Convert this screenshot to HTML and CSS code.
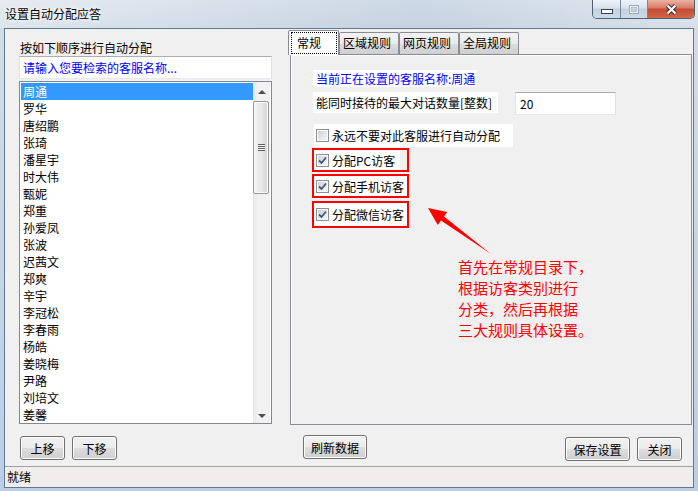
FILE: index.html
```html
<!DOCTYPE html>
<html lang="zh-CN">
<head>
  <meta charset="UTF-8" />
  <meta name="viewport" content="width=device-width, initial-scale=1.0" />
  <title>设置自动分配应答</title>
  <link rel="stylesheet" href="styles.css">
</head>
<body>
  <div class="window">
    <div class="titlebar">
      <span class="title">设置自动分配应答</span>
      <div class="caption-buttons">
        <span class="cap min"><span class="min-icon"></span></span>
        <span class="cap max"><span class="max-icon"></span></span>
        <span class="cap close">
          <svg width="13" height="11" viewBox="0 0 13 11">
            <path d="M2.5 1.5 L10.5 9.5 M10.5 1.5 L2.5 9.5" stroke="#3b2a27" stroke-width="4.2" />
            <path d="M2.5 1.5 L10.5 9.5 M10.5 1.5 L2.5 9.5" stroke="#ffffff" stroke-width="2.2" />
          </svg>
        </span>
      </div>
    </div>

    <div class="client">
      <div class="main">
        <div class="left">
          <div class="caption">按如下顺序进行自动分配</div>
          <div class="search">请输入您要检索的客服名称...</div>
          <div class="listbox">
            <ul class="items">
              <li class="selected">周通</li>
              <li>罗华</li>
              <li>唐绍鹏</li>
              <li>张琦</li>
              <li>潘星宇</li>
              <li>时大伟</li>
              <li>甄妮</li>
              <li>郑重</li>
              <li>孙爱凤</li>
              <li>张波</li>
              <li>迟茜文</li>
              <li>郑爽</li>
              <li>辛宇</li>
              <li>李冠松</li>
              <li>李春雨</li>
              <li>杨皓</li>
              <li>姜晓梅</li>
              <li>尹路</li>
              <li>刘培文</li>
              <li>姜馨</li>
            </ul>
            <div class="vscroll">
              <div class="arrow"><span class="tri up"></span></div>
              <div class="thumb"><span class="grip"></span></div>
              <div class="track"></div>
              <div class="arrow"><span class="tri down"></span></div>
            </div>
          </div>
          <div class="btn-row">
            <button class="btn small">上移</button>
            <button class="btn small">下移</button>
          </div>
        </div>

        <div class="right">
          <div class="tabs">
            <div class="tab active"><span class="focus">常规</span></div>
            <div class="tab">区域规则</div>
            <div class="tab">网页规则</div>
            <div class="tab">全局规则</div>
          </div>
          <div class="tab-page">
            <div class="blue-label">当前正在设置的客服名称:周通</div>
            <div class="field-row">
              <div class="field-label">能同时接待的最大对话数量[整数]</div>
              <div class="num-input">20</div>
            </div>
            <div class="check never"><span class="box"></span>永远不要对此客服进行自动分配</div>
            <div class="mark mark-pc">
              <div class="check short">
                <span class="box"><svg width="9" height="9" viewBox="0 0 9 9"><path d="M1 4.5 L3.5 7 L8 1.5" fill="none" stroke="#3f5589" stroke-width="1.8" /></svg></span>分配PC访客
              </div>
            </div>
            <div class="mark mark-mobile">
              <div class="check">
                <span class="box"><svg width="9" height="9" viewBox="0 0 9 9"><path d="M1 4.5 L3.5 7 L8 1.5" fill="none" stroke="#3f5589" stroke-width="1.8" /></svg></span>分配手机访客
              </div>
            </div>
            <div class="mark mark-wechat">
              <div class="check">
                <span class="box"><svg width="9" height="9" viewBox="0 0 9 9"><path d="M1 4.5 L3.5 7 L8 1.5" fill="none" stroke="#3f5589" stroke-width="1.8" /></svg></span>分配微信访客
              </div>
            </div>

            <svg class="note-arrow" width="75" height="60" viewBox="0 0 75 60">
              <polygon points="7,7 26.2,11.1 23,15.6 70,53 20,19.6 16.8,24.1" fill="#ff0000" />
            </svg>
            <div class="note">首先在常规目录下，<br>根据访客类别进行<br>分类，然后再根据<br>三大规则具体设置。</div>
          </div>
          <div class="btn-row actions">
            <button class="btn refresh">刷新数据</button>
            <button class="btn save">保存设置</button>
            <button class="btn small">关闭</button>
          </div>
        </div>
      </div>
      <div class="statusbar">就绪</div>
    </div>
  </div>
</body>
</html>
```

FILE: styles.css
```css
* { box-sizing: border-box; }
body {
  margin: 0;
  width: 698px;
  height: 491px;
  overflow: hidden;
  font-family: "Noto Sans CJK SC", "Noto Sans", sans-serif;
  font-size: 12px;
  color: #000;
}
.window {
  width: 698px;
  height: 491px;
  display: flex;
  flex-direction: column;
  padding-bottom: 3px;
  background: linear-gradient(180deg, #dde5ed 0, #d2dce7 28px, #b9cfe6 100%);
}

/* title bar */
.titlebar {
  height: 28px;
  flex: none;
  display: flex;
  justify-content: space-between;
  align-items: flex-start;
  padding: 0 3px 0 5px;
  background: linear-gradient(90deg, rgba(255,255,255,0.25), rgba(160,180,205,0.25) 60%, rgba(255,255,255,0.1));
}
.title {
  line-height: 28px;
  text-shadow: 0 0 6px #fff, 0 0 3px #fff;
}
.caption-buttons {
  display: flex;
  height: 19px;
  border: 1px solid #4e6073;
  border-top: 0;
  border-radius: 0 0 5px 5px;
  overflow: hidden;
}
.cap {
  height: 100%;
  display: flex;
  align-items: center;
  justify-content: center;
}
.cap.min, .cap.max {
  border-right: 1px solid #74879a;
  background: linear-gradient(#eef3f8, #d8e2ec 45%, #c2d0de 50%, #cfdbe7);
}
.cap.min { width: 28px; }
.cap.max { width: 27px; }
.cap.close {
  width: 46px;
  background: linear-gradient(#eab2a4, #d77a66 45%, #c54a30 50%, #d2664a);
}
.min-icon {
  width: 12px;
  height: 5px;
  margin-top: 4px;
  background: #fff;
  border: 1px solid #34404c;
}
.max-icon {
  width: 10px;
  height: 9px;
  border: 1px solid #9aa7b5;
  box-shadow: inset 0 0 0 1px #eef2f6, inset 0 0 0 2px #b3bfcb;
}

/* client area */
.client {
  flex: 1;
  margin: 0 4px;
  border: 1px solid #62788f;
  background: #f0f0f0;
  display: flex;
  flex-direction: column;
}
.main {
  flex: 1;
  display: flex;
  gap: 18px;
  padding-left: 14px;
}
.left {
  width: 253px;
  display: flex;
  flex-direction: column;
}
.caption {
  margin-top: 12px;
  line-height: 14px;
  padding-left: 1px;
}
.search {
  margin-top: 1px;
  height: 23px;
  line-height: 21px;
  padding-left: 3px;
  color: #0000ff;
  background: #fff;
  border: 1px solid;
  border-color: #abadb3 #dbdfe6 #e3e9ef #e2e3ea;
}
.listbox {
  margin-top: 2px;
  height: 343px;
  display: flex;
  padding: 0 1px;
  background: #fff;
  border: 1px solid #828790;
}
.items {
  flex: 1;
  list-style: none;
  margin: 0;
  padding: 1px 0 0 0;
  overflow: hidden;
}
.items li {
  height: 17px;
  line-height: 17px;
  padding-left: 2px;
}
.items li.selected {
  background: #3399ff;
  color: #fff;
}
.vscroll {
  width: 17px;
  display: flex;
  flex-direction: column;
  background: linear-gradient(90deg, #e6e6e6, #f2f2f2 30%, #f0f0f0);
}
.arrow {
  height: 17px;
  display: flex;
  align-items: center;
  justify-content: center;
}
.tri {
  width: 0;
  height: 0;
  border-left: 4px solid transparent;
  border-right: 4px solid transparent;
}
.tri.up { border-bottom: 4px solid #4d4d4d; margin-top: 3px; }
.tri.down { border-top: 4px solid #4d4d4d; margin-top: 2px; }
.thumb {
  height: 93px;
  margin: 2px 1px 0 0;
  border: 1px solid #979797;
  border-radius: 2px;
  background: linear-gradient(90deg, #f3f3f3, #e8e8e8 50%, #d4d4d4);
  box-shadow: inset 0 0 0 1px #fbfbfb;
  display: flex;
  align-items: center;
  justify-content: center;
}
.grip {
  width: 7px;
  height: 7px;
  background: repeating-linear-gradient(#5e5e5e 0 1px, #f6f6f6 1px 2px);
}
.track { flex: 1; }

/* buttons */
.btn-row {
  display: flex;
  gap: 7px;
  margin-top: 12px;
  padding-left: 1px;
}
.btn {
  height: 24px;
  padding: 0;
  font-family: inherit;
  font-size: 12px;
  color: #000;
  border: 1px solid #707070;
  border-radius: 3px;
  background: linear-gradient(#f2f2f2, #ebebeb 50%, #dddddd 51%, #cfcfcf);
  box-shadow: inset 0 0 0 1px #fcfcfc;
}
.btn.small { width: 45px; }
.btn.refresh { width: 64px; margin-top: -2px; }
.btn.save { width: 65px; margin-left: auto; }
.btn-row.actions {
  margin-top: 12px;
  padding: 0 10px 0 13px;
}

/* tabs */
.right {
  width: 402px;
  display: flex;
  flex-direction: column;
}
.tabs {
  margin-top: 1px;
  height: 24px;
  display: flex;
  align-items: flex-end;
}
.tab {
  width: 60px;
  height: 22px;
  line-height: 20px;
  padding-left: 3px;
  border: 1px solid #898c95;
  border-bottom: 0;
  border-radius: 2px 2px 0 0;
  background: linear-gradient(#f2f2f2, #ebebeb 50%, #dddddd 51%, #cfcfcf);
}
.tab.active {
  width: 51px;
  height: 25px;
  margin-left: -2px;
  margin-bottom: -1px;
  padding: 1px 1px 0 2px;
  background: #fff;
  position: relative;
  z-index: 1;
}
.focus {
  display: block;
  height: 22px;
  line-height: 20px;
  padding-left: 5px;
  border: 1px dotted #000;
}
.tab-page {
  position: relative;
  height: 371px;
  display: flex;
  flex-direction: column;
  align-items: flex-start;
  padding: 15px 0 0 22px;
  border: 1px solid #898c95;
  background: #f0f0f0;
  box-shadow: inset 1px 1px 0 #fff;
}
.blue-label {
  height: 17px;
  line-height: 17px;
  padding: 0 2px 0 3px;
  color: #0000ff;
  background: #fff;
}
.field-row {
  margin-top: 5px;
  display: flex;
  align-items: flex-start;
}
.field-label {
  width: 185px;
  height: 21px;
  line-height: 21px;
  padding-left: 3px;
  background: #fff;
}
.num-input {
  width: 101px;
  height: 23px;
  margin-left: 17px;
  line-height: 21px;
  padding-left: 4px;
  background: #fff;
  border: 1px solid;
  border-color: #abadb3 #dbdfe6 #e3e9ef #e2e3ea;
}
.check {
  display: flex;
  align-items: center;
  gap: 3px;
  height: 100%;
  width: 100%;
  padding-left: 2px;
  background: #fff;
}
.check.never {
  width: 199px;
  height: 23px;
  margin: 9px 0 0 1px;
}
.check.short { width: 86px; }
.box {
  width: 13px;
  height: 13px;
  flex: none;
  display: flex;
  align-items: center;
  justify-content: center;
  border: 1px solid #8e8f8f;
  background: linear-gradient(135deg, #c6cad0, #eeeeee 70%, #f8f8f8);
  box-shadow: inset 0 0 0 1px #fbfbfb;
}
.mark {
  width: 97px;
  margin-left: -1px;
  border: 2px solid #ff0000;
  display: flex;
}
.mark-pc { height: 24px; margin-top: 1px; }
.mark-mobile { height: 24px; margin-top: 2px; }
.mark-wechat { height: 27px; margin-top: 3px; }

/* annotation over the page */
.note-arrow {
  position: absolute;
  left: 130px;
  top: 146px;
}
.note {
  position: absolute;
  left: 167px;
  top: 201px;
  font-size: 15px;
  line-height: 21px;
  color: #ff0000;
}

/* status bar */
.statusbar {
  height: 21px;
  flex: none;
  line-height: 20px;
  padding-left: 2px;
  border-top: 1px solid #a0a0a0;
  background: #f0edec;
}
```
